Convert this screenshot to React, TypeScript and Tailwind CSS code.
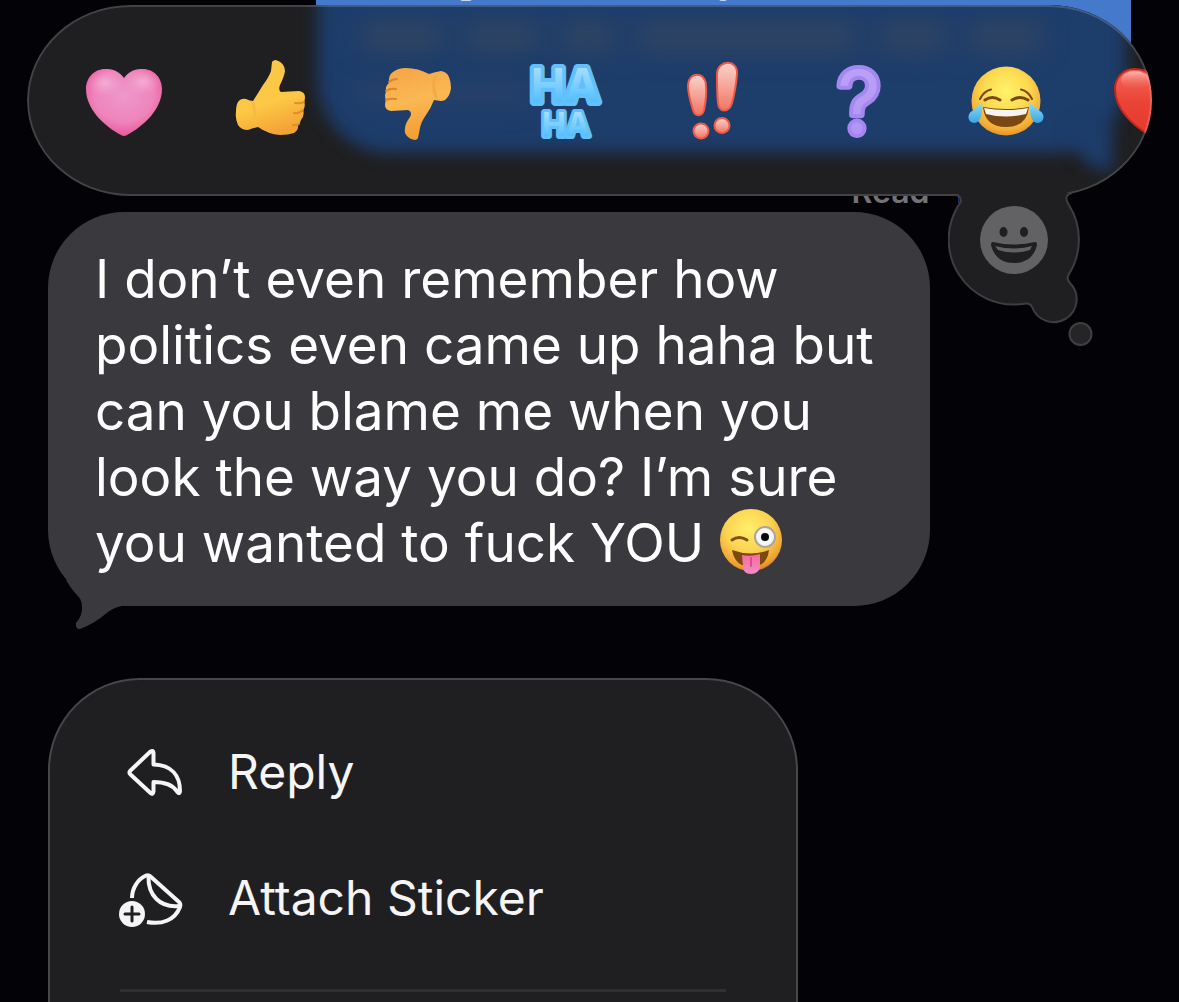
import type { ReactNode } from 'react'

const HEART =
  'M38 18 C44 10 50 9 57 9 C68 9 76 18 76 29 C76 49 58 66 41 75 Q38 77 35 75 C18 66 0 49 0 29 C0 18 8 9 19 9 C26 9 32 10 38 18Z'

function Glyph({ children }: { children: ReactNode }) {
  return (
    <svg viewBox="0 0 76 82" className="block h-[82px] w-[76px] overflow-visible" aria-hidden="true">
      {children}
    </svg>
  )
}

function PinkHeart() {
  return (
    <Glyph>
      <defs>
        <radialGradient id="pink" cx="50%" cy="40%" r="65%">
          <stop offset="0" stopColor="#ee98cb" />
          <stop offset="0.6" stopColor="#ee84bb" />
          <stop offset="1" stopColor="#ea4d92" />
        </radialGradient>
        <radialGradient id="pinkShine" cx="50%" cy="50%" r="50%">
          <stop offset="0" stopColor="#f6bddd" stopOpacity="0.7" />
          <stop offset="1" stopColor="#f3a6d2" stopOpacity="0" />
        </radialGradient>
      </defs>
      <path d={HEART} fill="url(#pink)" />
      <ellipse cx="19" cy="23" rx="18" ry="14" fill="url(#pinkShine)" />
      <ellipse cx="57" cy="22" rx="18" ry="13" fill="url(#pinkShine)" />
    </Glyph>
  )
}

function RedHeart() {
  return (
    <Glyph>
      <defs>
        <linearGradient id="red" x1="0" y1="0" x2="0" y2="1">
          <stop offset="0" stopColor="#f5675a" />
          <stop offset="0.5" stopColor="#ea4335" />
          <stop offset="1" stopColor="#e5382c" />
        </linearGradient>
        <linearGradient id="redShine" x1="0" y1="0" x2="0" y2="1">
          <stop offset="0" stopColor="#fbb9b2" />
          <stop offset="1" stopColor="#f26a5d" stopOpacity="0" />
        </linearGradient>
      </defs>
      <path d={HEART} fill="url(#red)" stroke="#c6261c" strokeWidth="2" />
      <ellipse cx="20" cy="20" rx="14" ry="9" fill="url(#redShine)" />
    </Glyph>
  )
}

function ThumbsUp() {
  return (
    <Glyph>
      <defs>
        <linearGradient id="up" x1="0.2" y1="0" x2="0.5" y2="1">
          <stop offset="0" stopColor="#fbc548" />
          <stop offset="0.6" stopColor="#fdc845" />
          <stop offset="1" stopColor="#f3a336" />
        </linearGradient>
      </defs>
      <path
        d="M39 2 Q40 0 43 0 Q52 3 52 11 Q51 17 47 25 Q45 30 48 32 L66 31 Q72 32 72 37 Q72 40 71 42 Q73 46 70 50 Q72 55 68 60 Q67 64 65 65 Q66 70 61 73 Q55 75 47 75 Q35 74 25 67 Q20 68 15 70 Q8 70 5 65 Q2 58 3 52 Q3 45 5 42 Q8 38 13 39 Q17 41 20 41 L30 25 Q36 17 38 11Z"
        fill="url(#up)"
      />
      <path
        d="M62 43 Q67 44 71 42 M61 53 Q66 54 70 50 M60 65 Q63 66 66 64"
        fill="none"
        stroke="#de8f2c"
        strokeWidth="2"
        strokeLinecap="round"
      />
      <path d="M20 43 Q23 53 22 64" fill="none" stroke="#f6bb41" strokeWidth="3" strokeLinecap="round" />
    </Glyph>
  )
}

function ThumbsDown() {
  return (
    <Glyph>
      <defs>
        <linearGradient id="down" x1="0.3" y1="0" x2="0.5" y2="1">
          <stop offset="0" stopColor="#f6a748" />
          <stop offset="0.45" stopColor="#fab853" />
          <stop offset="1" stopColor="#f39c2f" />
        </linearGradient>
      </defs>
      <path
        d="M26 8 Q38 8 49 14 Q55 12 61 11 Q67 12 69 17 Q71 22 71 28 Q70 35 67 38 Q65 41 61 41 L54 40 Q51 48 46 55 Q41 62 40 68 L38 78 Q37 80 35 80 Q28 79 25 73 Q24 66 28 60 Q31 56 31 54 Q31 51 28 50 L11 51 Q5 50 5 45 Q5 42 6 40 Q4 36 6 32 Q5 26 9 23 Q8 15 13 12 Q18 8 26 8Z"
        fill="url(#down)"
      />
      <path
        d="M9 22 Q12 19 17 19 M6 31 Q10 28 16 29 M6 40 Q10 38 16 39"
        fill="none"
        stroke="#dc862c"
        strokeWidth="2"
        strokeLinecap="round"
      />
      <path d="M55 17 Q52 27 56 37" fill="none" stroke="#f5a844" strokeWidth="3" strokeLinecap="round" />
    </Glyph>
  )
}

function HaHa() {
  return (
    <Glyph>
      <defs>
        <linearGradient id="haha" x1="0" y1="0" x2="0" y2="1">
          <stop offset="0.2" stopColor="#a5dcff" />
          <stop offset="0.6" stopColor="#6fcaff" />
          <stop offset="0.8" stopColor="#56bdfd" />
        </linearGradient>
      </defs>
      <g
        className="font-['Inter',sans-serif] font-bold"
        fill="url(#haha)"
        stroke="#61c1fc"
        strokeLinejoin="round"
        textAnchor="middle"
        paintOrder="stroke"
      >
        <text x="38" y="42" fontSize="46" strokeWidth="8">
          HA
        </text>
        <text x="39" y="76" fontSize="32" strokeWidth="6">
          HA
        </text>
      </g>
    </Glyph>
  )
}

function Exclaim() {
  return (
    <Glyph>
      <defs>
        <linearGradient id="bang" x1="0" y1="0" x2="0" y2="1">
          <stop offset="0" stopColor="#fad3cd" />
          <stop offset="0.5" stopColor="#f6a497" />
          <stop offset="1" stopColor="#f37462" />
        </linearGradient>
      </defs>
      <g fill="url(#bang)" stroke="#ef5a48" strokeWidth="2">
        <path d="M14 26 C14 11 32 11 32 26 C33 36 31 45 30 50 C28 57 21 57 19 50 C17 43 14 34 14 26Z" />
        <circle cx="27" cy="71" r="7.5" />
        <path d="M43 14 C44 -1 64 -1 63 14 C62 26 60 36 58 43 C55 53 45 53 44 43 C43 35 43 24 43 14Z" />
        <circle cx="48" cy="65.5" r="7.5" />
      </g>
    </Glyph>
  )
}

function Question() {
  return (
    <Glyph>
      <defs>
        <linearGradient id="ask" x1="0" y1="0" x2="0" y2="1">
          <stop offset="0" stopColor="#bfa3f6" />
          <stop offset="1" stopColor="#ae91f5" />
        </linearGradient>
      </defs>
      <text
        x="38"
        y="73"
        fontSize="86"
        className="font-['Inter',sans-serif] font-normal"
        fill="url(#ask)"
        stroke="#a587f2"
        strokeWidth="8"
        strokeLinejoin="round"
        textAnchor="middle"
        paintOrder="stroke"
      >
        ?
      </text>
    </Glyph>
  )
}

function Laugh() {
  return (
    <Glyph>
      <defs>
        <radialGradient id="face" cx="50%" cy="36%" r="66%">
          <stop offset="0" stopColor="#fff36b" />
          <stop offset="0.5" stopColor="#fcd94f" />
          <stop offset="0.85" stopColor="#f3ad35" />
          <stop offset="1" stopColor="#e28a26" />
        </radialGradient>
        <linearGradient id="tear" x1="0" y1="0" x2="0" y2="1">
          <stop offset="0" stopColor="#8fdcf6" />
          <stop offset="1" stopColor="#3aa4e4" />
        </linearGradient>
      </defs>
      <circle cx="38" cy="41" r="34.5" fill="url(#face)" />
      <g fill="none" stroke="#7a4712" strokeLinecap="round">
        <path d="M12 39 Q16 31 23 29.5 M64 39 Q60 31 53 29.5" strokeWidth="2" />
        <path d="M17 40 Q24 35 32 40 M44 40 Q52 35 60 40" strokeWidth="3" />
      </g>
      <path d="M15 47 Q38 51 61 47 Q59 67 38 67 Q17 67 15 47Z" fill="#7a4712" />
      <path d="M16 48 Q38 52 60 48 L58 54 Q38 59 18 54Z" fill="#f6f3f1" />
      <path d="M14 43 C15 52 13 63 6 63 C-1 62 -1 54 4 51Z" fill="url(#tear)" />
      <path d="M62 43 C61 52 63 63 70 63 C77 62 77 54 72 51Z" fill="url(#tear)" />
    </Glyph>
  )
}

function WinkTongue() {
  return (
    <svg
      viewBox="0 0 64 66"
      className="-my-2 inline-block h-[66px] w-16 align-[-4px]"
      role="img"
      aria-label="Winking face with tongue"
    >
      <defs>
        <radialGradient id="wink" cx="46%" cy="32%" r="68%">
          <stop offset="0" stopColor="#fff06a" />
          <stop offset="0.55" stopColor="#fbd251" />
          <stop offset="0.9" stopColor="#efa033" />
          <stop offset="1" stopColor="#de8125" />
        </radialGradient>
        <linearGradient id="tongue" x1="0" y1="0" x2="0" y2="1">
          <stop offset="0" stopColor="#f8699f" />
          <stop offset="1" stopColor="#f08fc4" />
        </linearGradient>
      </defs>
      <circle cx="32" cy="32" r="31" fill="url(#wink)" />
      <path d="M13 32 Q20 27 28 32" fill="none" stroke="#85500f" strokeWidth="3" strokeLinecap="round" />
      <circle cx="46" cy="29" r="10" fill="#f5f5f5" stroke="#aaa59c" strokeWidth="2" />
      <circle cx="46" cy="29" r="4" fill="#080808" />
      <path d="M13 42 Q32 49 50 42 Q48 59 32 59 Q16 59 13 42Z" fill="#7c4a11" />
      <path d="M23 47 Q32 49 41 46 L41 58 Q40 66 32 66 Q24 66 24 58Z" fill="url(#tongue)" />
      <path d="M32 50 V58" stroke="#dc4b86" strokeWidth="2" strokeLinecap="round" />
    </svg>
  )
}

function ReplyIcon() {
  return (
    <svg
      viewBox="0 0 64 64"
      className="size-16"
      fill="none"
      stroke="currentColor"
      strokeWidth="4"
      strokeLinejoin="round"
      aria-hidden="true"
    >
      <path d="M10.5 30.5 L30.5 11.5 Q33.5 10 33.5 13 V24.5 C52 25 60 36 60 51 Q59.5 55 57 51.5 C53 45 46 42 33.5 42 V51.5 Q33 55 30.5 53 L10.5 34.5 Q8.5 32.5 10.5 30.5Z" />
    </svg>
  )
}

function StickerIcon() {
  return (
    <svg
      viewBox="0 0 64 64"
      className="size-16 overflow-visible"
      fill="none"
      stroke="currentColor"
      strokeWidth="4"
      strokeLinejoin="round"
      aria-hidden="true"
    >
      <path d="M12 32 C12 22 18 13 26 9.5 Q28.5 8.5 30.5 10.5 L59 36 Q61 38 60 41 C55 54 42 59 27 56" />
      <path d="M28.5 11 C28 29 40 42 59 40" />
      <circle cx="12" cy="48" r="13" fill="currentColor" stroke="none" />
      <path d="M12 41 V55 M5 48 H19" stroke="#1f1f21" strokeWidth="3" strokeLinecap="round" />
    </svg>
  )
}

function PickerTail() {
  return (
    <button type="button" aria-label="More reactions" className="absolute top-[190px] right-[85px]">
      <svg viewBox="948 190 146 160" className="block h-[160px] w-[146px]" aria-hidden="true">
        <path d="M959 190 H1067 V206 H959Z" fill="#1f1f21" />
        <path
          d="M956 195 Q961 196 961 201 Q960 204 958 206 A65 65 0 0 0 1022 304 Q1030 302 1032 307 A23 23 0 1 0 1070 283 Q1066 279 1069 274 A65 65 0 0 0 1069 205 Q1065 199 1067 196 Q1068 194 1072 193"
          fill="#1f1f21"
          stroke="#3e3e41"
          strokeWidth="2"
        />
        <circle cx="1080.5" cy="334" r="11" fill="#252527" stroke="#3f3f42" strokeWidth="2" />
        <circle cx="1014" cy="240" r="34" fill="#626264" />
        <g fill="#1f1f21">
          <ellipse cx="1003.5" cy="232" rx="4" ry="5" />
          <ellipse cx="1024" cy="232" rx="4" ry="5" />
          <path d="M993 242 Q1014 247 1035 242 Q1037 242 1037 245 C1034 257 1026 263 1014 263 C1002 263 994 257 991 245 Q991 242 993 242Z" />
        </g>
        <path d="M995 246 Q1014 251 1032 246 L1030 250 Q1014 255 998 250Z" fill="#626264" />
      </svg>
    </button>
  )
}

const reactions = [
  { name: 'Love', icon: <PinkHeart /> },
  { name: 'Like', icon: <ThumbsUp /> },
  { name: 'Dislike', icon: <ThumbsDown /> },
  { name: 'Laugh', icon: <HaHa /> },
  { name: 'Emphasize', icon: <Exclaim /> },
  { name: 'Question', icon: <Question /> },
  { name: 'Tears of joy', icon: <Laugh /> },
  { name: 'Red heart', icon: <RedHeart /> },
]

const actions = [
  { label: 'Reply', icon: <ReplyIcon /> },
  { label: 'Attach Sticker', icon: <StickerIcon /> },
]

function SentBubble() {
  return (
    <div className="absolute top-0 right-12 h-[150px] w-[815px] rounded-b-[60px] bg-[#4479cc]">
      <span className="absolute top-[-4px] left-[144px] h-[5px] w-3 rounded-full bg-[#c5d6f0]" />
      <span className="absolute top-[-4px] left-[403px] h-[5px] w-2 rounded-full bg-[#c5d6f0]" />
    </div>
  )
}

function ReactionBar() {
  return (
    <section
      aria-label="Reactions"
      className="relative flex h-[191px] items-center gap-[71px] overflow-hidden rounded-[104px/96px] bg-[#1f1f21] pl-[59px]"
    >
      {/* sent bubble seen through the frosted material */}
      <div className="absolute -top-5 right-[26px] h-[168px] w-[808px] rounded-b-[72px] bg-[#1d3d6b] blur-[8px]" />
      <div className="absolute top-[120px] right-[40px] h-[46px] w-[40px] rounded-bl-full bg-[#1d3d6b] blur-[8px]" />
      <div className="absolute top-4 right-[110px] flex h-8 w-[680px] gap-6 blur-[12px]">
        <span className="w-20 bg-[#2f4462]" />
        <span className="w-[72px] bg-[#2f4462]" />
        <span className="w-[52px] bg-[#2f4462]" />
        <span className="grow bg-[#2f4462]" />
        <span className="w-[66px] bg-[#2f4462]" />
        <span className="w-[72px] bg-[#2f4462]" />
      </div>
      <div className="absolute top-[76px] left-[330px] h-6 w-[170px] bg-[#27416a] blur-[12px]" />
      {reactions.map((r) => (
        <button key={r.name} type="button" aria-label={r.name} className="relative shrink-0">
          {r.icon}
        </button>
      ))}
      <div className="pointer-events-none absolute inset-0 rounded-[104px/96px] border-2 border-white/16" />
    </section>
  )
}

export default function App() {
  return (
    <main className="relative flex min-h-screen flex-col overflow-hidden bg-[#030207] font-['Inter','Liberation_Sans',sans-serif] text-white">
      <SentBubble />
      <p className="absolute top-[172px] right-[214px] flex gap-[22px] text-[32px] leading-10 font-semibold text-[#737377]">
        <span>Read</span>
        <span>1</span>
      </p>

      <div className="relative px-[27px] pt-[5px]">
        <ReactionBar />
        <PickerTail />
      </div>

      <div className="relative mt-4 ml-12 w-[882px] max-w-full rounded-[76px] bg-[#3a393e] px-[47px] pt-[34px] pb-[30px]">
        <svg viewBox="0 0 80 74" className="absolute -bottom-6 left-0 h-[74px] w-20" aria-hidden="true">
          <path
            d="M18 24 Q24 34 29 39 Q34 44 34 50 Q35 59 28 67 Q27 73 32 73 Q46 68 60 56 Q67 51 74 50 L80 24Z"
            fill="#3a393e"
          />
        </svg>
        <p className="relative text-[53px] leading-[66px]">
          I don’t even remember how politics even came up haha but can you blame me when you look the way you do? I’m
          sure you wanted to fuck YOU <WinkTongue />
        </p>
      </div>

      <div className="mt-[72px] ml-12 w-[750px] max-w-full grow rounded-t-[92px] border-2 border-b-0 border-[#47474b] bg-[#1f1f21] pt-[29px] text-[#f5f5f7]">
        {actions.map((a) => (
          <button
            key={a.label}
            type="button"
            className="flex h-[126px] w-full items-center gap-11 px-[70px] text-left text-[48px] leading-[60px]"
          >
            {a.icon}
            {a.label}
          </button>
        ))}
        <hr className="mx-[70px] mt-7 h-[3px] border-0 bg-[#303033]" />
      </div>
    </main>
  )
}
